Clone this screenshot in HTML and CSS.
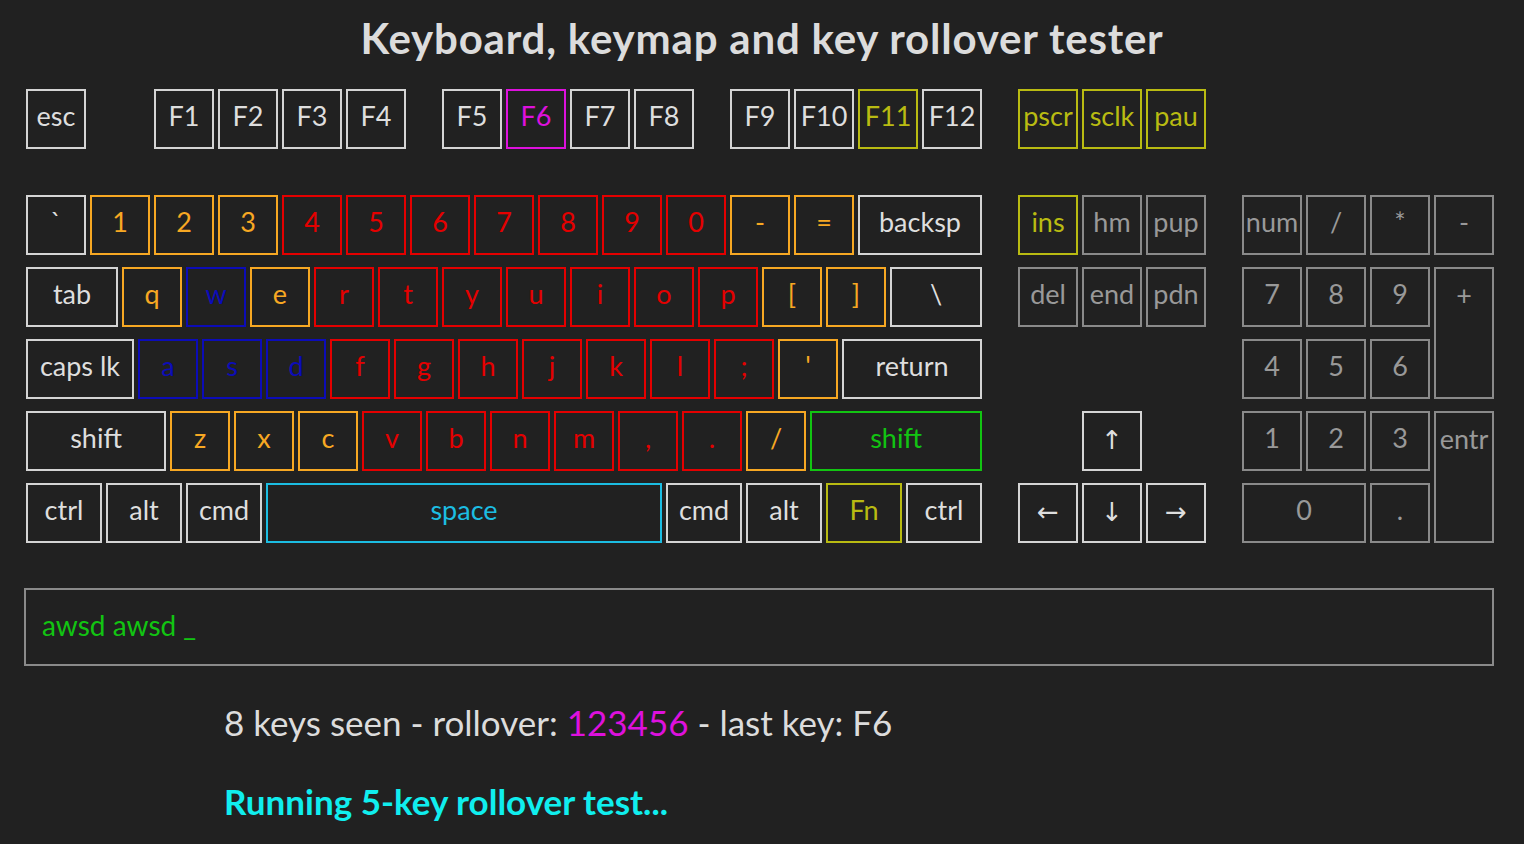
FILE: index.html
```html
<!DOCTYPE html>
<html>
<head>
<meta charset="utf-8">
<title>Keyboard tester</title>
<link rel="stylesheet" href="styles.css">
</head>
<body>
<h1 class="title">Keyboard, keymap and key rollover tester</h1>

<div class="frow">
  <div class="key">esc</div>
  <div class="key sp1">F1</div>
  <div class="key">F2</div>
  <div class="key">F3</div>
  <div class="key">F4</div>
  <div class="key sph">F5</div>
  <div class="key mag">F6</div>
  <div class="key">F7</div>
  <div class="key">F8</div>
  <div class="key sph">F9</div>
  <div class="key">F10</div>
  <div class="key olv">F11</div>
  <div class="key">F12</div>
  <div class="key sph olv">pscr</div>
  <div class="key olv">sclk</div>
  <div class="key olv">pau</div>
</div>

<div class="board">
  <div class="main">
    <div class="row">
      <div class="key">`</div>
      <div class="key org">1</div>
      <div class="key org">2</div>
      <div class="key org">3</div>
      <div class="key red">4</div>
      <div class="key red">5</div>
      <div class="key red">6</div>
      <div class="key red">7</div>
      <div class="key red">8</div>
      <div class="key red">9</div>
      <div class="key red">0</div>
      <div class="key org">-</div>
      <div class="key org">=</div>
      <div class="key u2">backsp</div>
    </div>
    <div class="row">
      <div class="key u15">tab</div>
      <div class="key org">q</div>
      <div class="key blu">w</div>
      <div class="key org">e</div>
      <div class="key red">r</div>
      <div class="key red">t</div>
      <div class="key red">y</div>
      <div class="key red">u</div>
      <div class="key red">i</div>
      <div class="key red">o</div>
      <div class="key red">p</div>
      <div class="key org">[</div>
      <div class="key org">]</div>
      <div class="key u15">\</div>
    </div>
    <div class="row">
      <div class="key u175">caps lk</div>
      <div class="key blu">a</div>
      <div class="key blu">s</div>
      <div class="key blu">d</div>
      <div class="key red">f</div>
      <div class="key red">g</div>
      <div class="key red">h</div>
      <div class="key red">j</div>
      <div class="key red">k</div>
      <div class="key red">l</div>
      <div class="key red">;</div>
      <div class="key org">'</div>
      <div class="key u225">return</div>
    </div>
    <div class="row">
      <div class="key u225">shift</div>
      <div class="key org">z</div>
      <div class="key org">x</div>
      <div class="key org">c</div>
      <div class="key red">v</div>
      <div class="key red">b</div>
      <div class="key red">n</div>
      <div class="key red">m</div>
      <div class="key red">,</div>
      <div class="key red">.</div>
      <div class="key org">/</div>
      <div class="key u275 grn">shift</div>
    </div>
    <div class="row">
      <div class="key u125">ctrl</div>
      <div class="key u125">alt</div>
      <div class="key u125">cmd</div>
      <div class="key u625 cyn">space</div>
      <div class="key u125">cmd</div>
      <div class="key u125">alt</div>
      <div class="key u125 olv">Fn</div>
      <div class="key u125">ctrl</div>
    </div>
  </div>

  <div class="nav">
    <div class="key olv">ins</div>
    <div class="key dim">hm</div>
    <div class="key dim">pup</div>
    <div class="key dim">del</div>
    <div class="key dim">end</div>
    <div class="key dim">pdn</div>
    <div class="key arrow up">&#8593;</div>
    <div class="key arrow lt">&#8592;</div>
    <div class="key arrow dn">&#8595;</div>
    <div class="key arrow rt">&#8594;</div>
  </div>

  <div class="pad">
    <div class="key dim">num</div>
    <div class="key dim">/</div>
    <div class="key dim">*</div>
    <div class="key dim">-</div>
    <div class="key dim">7</div>
    <div class="key dim">8</div>
    <div class="key dim">9</div>
    <div class="key dim tall">+</div>
    <div class="key dim">4</div>
    <div class="key dim">5</div>
    <div class="key dim">6</div>
    <div class="key dim">1</div>
    <div class="key dim">2</div>
    <div class="key dim">3</div>
    <div class="key dim tall">entr</div>
    <div class="key dim wide">0</div>
    <div class="key dim">.</div>
  </div>
</div>

<div class="input">awsd awsd _</div>

<p class="status">8 keys seen - rollover: <span class="hl">123456</span> - last key: F6</p>
<p class="running">Running 5-key rollover test...</p>
</body>
</html>
```

FILE: styles.css
```css
html, body {
  margin: 0;
  padding: 0;
  background: #212121;
  color: #dcdcdc;
  font-family: "Lato", "Open Sans", sans-serif;
}

body {
  width: 1524px;
  height: 844px;
  overflow: hidden;
}

.title {
  margin: 0;
  padding-top: 13px;
  height: 50px;
  line-height: 50px;
  text-align: center;
  font-size: 42px;
  font-weight: 700;
  color: #dcdcdc;
  letter-spacing: 0.8px;
}

.frow {
  display: flex;
  gap: 4px;
  margin-top: 26px;
  padding-left: 26px;
}

.key {
  box-sizing: border-box;
  width: 60px;
  height: 60px;
  border: 2px solid #d4d4d4;
  color: #dedede;
  font-size: 27px;
  display: flex;
  align-items: center;
  justify-content: center;
  padding-bottom: 7px;
  white-space: nowrap;
  flex: none;
}

.sp1 { margin-left: 64px; }
.sph { margin-left: 32px; }

.u125 { width: 76px; }
.u15 { width: 92px; }
.u175 { width: 108px; }
.u2 { width: 124px; }
.u225 { width: 140px; }
.u275 { width: 172px; }
.u625 { width: 396px; }

.org { border-color: #f7a823; color: #f7a823; }
.red { border-color: #e40000; color: #e40000; }
.blu { border-color: #0c0cb8; color: #0c0cb8; }
.grn { border-color: #12c412; color: #12c412; }
.cyn { border-color: #1cbde2; color: #1cbde2; }
.olv { border-color: #b9bb12; color: #b9bb12; }
.mag { border-color: #dd11dd; color: #dd11dd; }
.dim { border-color: #8a8a8a; color: #999999; }

.board {
  display: flex;
  margin-top: 46px;
  padding-left: 26px;
}

.main {
  display: flex;
  flex-direction: column;
  gap: 12px;
}

.row {
  display: flex;
  gap: 4px;
}

.nav {
  margin-left: 36px;
  display: grid;
  grid-template-columns: repeat(3, 60px);
  grid-template-rows: repeat(5, 60px);
  column-gap: 4px;
  row-gap: 12px;
}

.nav .up { grid-column: 2; grid-row: 4; }
.nav .lt { grid-column: 1; grid-row: 5; }
.nav .dn { grid-column: 2; grid-row: 5; }
.nav .rt { grid-column: 3; grid-row: 5; }

.arrow {
  font-family: "DejaVu Sans", sans-serif;
  font-size: 26px;
  padding-bottom: 3px;
}

.pad {
  margin-left: 36px;
  display: grid;
  grid-template-columns: repeat(4, 60px);
  grid-template-rows: repeat(5, 60px);
  column-gap: 4px;
  row-gap: 12px;
}

.pad .tall {
  grid-row: span 2;
  height: auto;
  align-items: flex-start;
  padding-top: 9px;
}

.pad .wide {
  grid-column: span 2;
  width: auto;
}

.input {
  box-sizing: border-box;
  margin: 45px 0 0 24px;
  width: 1470px;
  height: 78px;
  border: 2px solid #8a8a8a;
  padding: 0 16px 4px;
  display: flex;
  align-items: center;
  color: #12c412;
  font-size: 28px;
}

.status {
  margin: 34px 0 0 224px;
  font-size: 35px;
  line-height: 44px;
  color: #dcdcdc;
}

.hl { color: #dd11dd; }

.running {
  margin: 35px 0 0 224px;
  font-size: 35px;
  line-height: 44px;
  font-weight: 700;
  color: #10eeee;
}
```
